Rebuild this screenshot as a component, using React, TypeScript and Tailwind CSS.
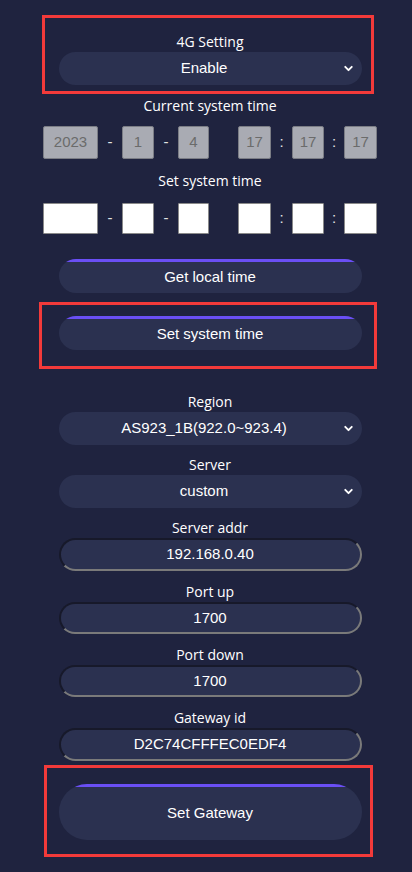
import { ChevronDown } from 'lucide-react';

const label = "h-[20px] leading-[20px] text-[14px] text-white font-['Open_Sans',sans-serif]";
const pill = "w-[303px] rounded-full bg-[#2b3150] text-white text-[15px] font-['Liberation_Sans',Arial,sans-serif]";

function Select({ value }: { value: string }) {
  return (
    <div className={`${pill} relative h-[33px] flex items-center justify-center pr-[12px]`}>
      <span>{value}</span>
      <ChevronDown className="absolute right-[7px] top-[10px] text-white" size={13} strokeWidth={3.5} />
    </div>
  );
}

function Field({ value, h = 32 }: { value: string; h?: number }) {
  return (
    <div
      className={`${pill} flex items-center justify-center border-2 border-t-[#17192a] border-l-[#17192a] border-r-[#7a7a7a] border-b-[#7a7a7a] ${h === 33 ? 'h-[33px]' : 'h-[32px]'}`}
    >
      {value}
    </div>
  );
}

function Button({ text, tall = false }: { text: string; tall?: boolean }) {
  return (
    <div
      className={`${pill} flex items-center justify-center pt-[3px] bg-[linear-gradient(#6a4ff5_0_3px,#2b3150_3px)] ${tall ? 'h-[56px]' : 'h-[34px]'}`}
    >
      {text}
    </div>
  );
}

function TimeRow({ values }: { values?: string[] }) {
  const box = values
    ? "h-[33px] flex items-center justify-center bg-[#a9abb3] border border-[#7b7d85] rounded-[2px] text-[#6b6b6b] text-[15px]"
    : "h-[31px] bg-white border border-[#8a8a8a] rounded-[1px]";
  const v = values ?? ['', '', '', '', '', ''];
  const sep = "text-[#e3e3e3] text-[15px] text-center";
  return (
    <div className="flex items-center font-['Liberation_Sans',Arial,sans-serif]">
      <div className={`${box} w-[55px]`}>{v[0]}</div>
      <div className={`${sep} w-[24px]`}>-</div>
      <div className={`${box} w-[32px]`}>{v[1]}</div>
      <div className={`${sep} w-[24px]`}>-</div>
      <div className={`${box} w-[31px]`}>{v[2]}</div>
      <div className="w-[29px]" />
      <div className={`${box} w-[33px]`}>{v[3]}</div>
      <div className={`${sep} w-[21px]`}>:</div>
      <div className={`${box} w-[32px]`}>{v[4]}</div>
      <div className={`${sep} w-[20px]`}>:</div>
      <div className={`${box} w-[33px]`}>{v[5]}</div>
    </div>
  );
}

export default function App() {
  return (
    <div className="min-h-[872px] w-full bg-[#1f233f] pl-[8px] flex flex-col items-center pt-[15px]">
      {/* 4G setting */}
      <div className="w-[332px] mr-[4px] border-[3px] border-[#f23a3a] pt-[14px] pb-[6px] flex flex-col items-center">
        <div className="pl-[4px] flex flex-col items-center">
          <div className={`${label} h-[19px] leading-[19px]`}>4G Setting</div>
          <Select value="Enable" />
        </div>
      </div>

      <div className={`${label} mt-[2px]`}>Current system time</div>
      <div className="mt-[10px]">
        <TimeRow values={['2023', '1', '4', '17', '17', '17']} />
      </div>

      <div className={`${label} mt-[12px]`}>Set system time</div>
      <div className="mt-[12px]">
        <TimeRow />
      </div>

      <div className="mt-[25px]">
        <Button text="Get local time" />
      </div>

      <div className="mt-[9px] w-[338px] mr-[4px] border-[3px] border-[#f23a3a] pt-[11px] pb-[16px] flex flex-col items-center">
        <div className="pl-[4px]">
          <Button text="Set system time" />
        </div>
      </div>

      <div className={`${label} mt-[23px]`}>Region</div>
      <Select value="AS923_1B(922.0~923.4)" />

      <div className={`${label} mt-[10px]`}>Server</div>
      <Select value="custom" />

      <div className={`${label} mt-[10px]`}>Server addr</div>
      <Field value="192.168.0.40" h={33} />

      <div className={`${label} mt-[11px]`}>Port up</div>
      <Field value="1700" />

      <div className={`${label} mt-[11px]`}>Port down</div>
      <Field value="1700" />

      <div className={`${label} mt-[11px]`}>Gateway id</div>
      <Field value="D2C74CFFFEC0EDF4" h={33} />

      <div className="mt-[4px] w-[329px] mr-[4px] border-[3px] border-[#f23a3a] pt-[16px] pb-[14px] flex flex-col items-center">
        <div className="pl-[4px]">
          <Button text="Set Gateway" tall />
        </div>
      </div>
    </div>
  );
}
